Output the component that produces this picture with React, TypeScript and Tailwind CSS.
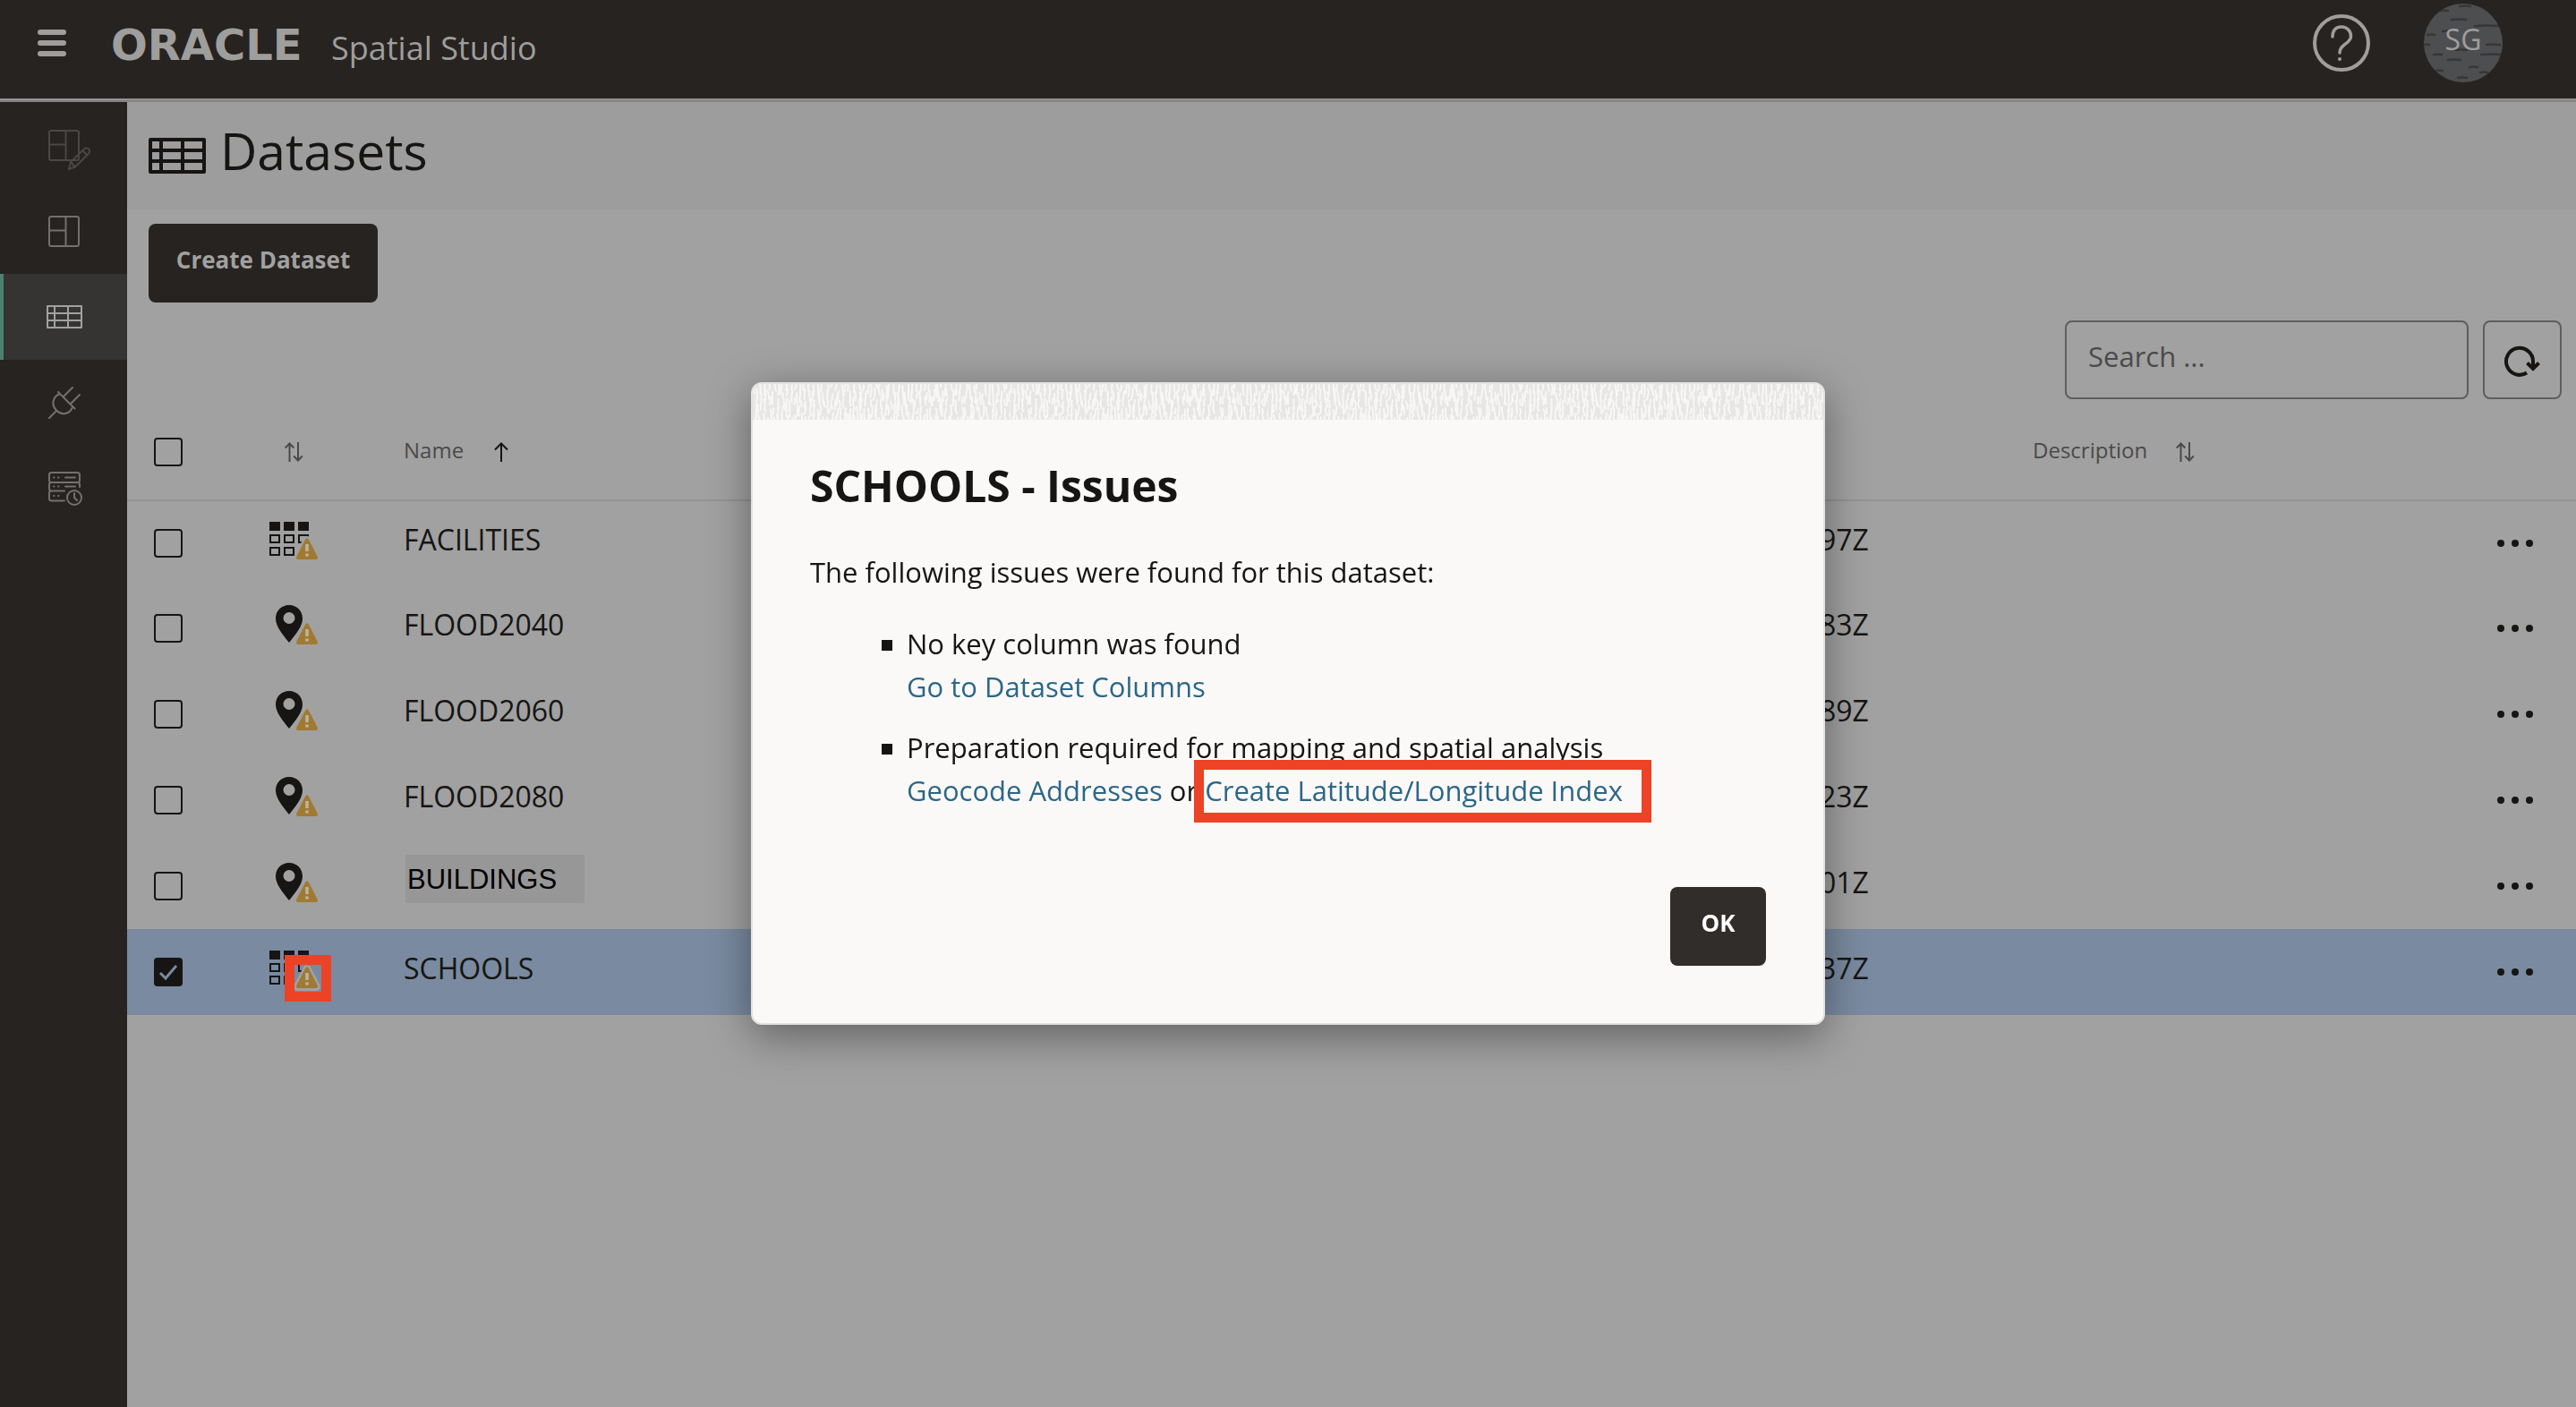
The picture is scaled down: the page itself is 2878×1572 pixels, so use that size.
import type { ReactNode } from "react";

type Kind = "table" | "pin";

interface Dataset {
  name: string;
  kind: Kind;
  modified: string;
  checked?: boolean;
  renamed?: boolean;
}

const datasets: Dataset[] = [
  { name: "FACILITIES", kind: "table", modified: "97Z" },
  { name: "FLOOD2040", kind: "pin", modified: "83Z" },
  { name: "FLOOD2060", kind: "pin", modified: "89Z" },
  { name: "FLOOD2080", kind: "pin", modified: "23Z" },
  { name: "BUILDINGS", kind: "pin", modified: "01Z", renamed: true },
  { name: "SCHOOLS", kind: "table", modified: "37Z", checked: true },
];

/* ---------- icons ---------- */

function LayoutIcon({ pencil = false }: { pencil?: boolean }) {
  return (
    <svg className="h-[52px] w-[56px] overflow-visible" viewBox="0 0 56 52" fill="none" stroke="currentColor" strokeWidth="2" strokeLinejoin="round" aria-hidden="true">
      <rect x="11" y="10" width="33" height="33" rx="2" />
      <path d="M29.500 10v33M11 25.500h18.500" />
      {pencil && (
        <g fill="none">
          <path d="M33 53l2-8 15-14.500a3.400 3.400 0 0 1 5 5L40 50.500z" />
          <path d="M35 45l5 5.500M48 32l5 5" />
        </g>
      )}
    </svg>
  );
}

function GridIcon({ large = false }: { large?: boolean }) {
  return large ? (
    <svg className="h-10 w-16" viewBox="0 0 64 40" fill="none" stroke="currentColor" strokeWidth="4" strokeLinejoin="round" aria-hidden="true">
      <rect x="2" y="2" width="60" height="36" />
      <path d="M14 2v36M38 2v36M2 14h60M2 26h60" />
    </svg>
  ) : (
    <svg className="h-[26px] w-10" viewBox="0 0 40 26" fill="none" stroke="currentColor" strokeWidth="2" strokeLinejoin="round" aria-hidden="true">
      <rect x="1" y="1" width="38" height="24" />
      <path d="M9 1v24M24 1v24M1 9h38M1 17h38" />
    </svg>
  );
}

function PlugIcon() {
  return (
    <svg className="h-9 w-9" viewBox="0 0 36 36" fill="none" stroke="currentColor" strokeWidth="2" strokeLinecap="round" aria-hidden="true">
      <path d="M1 35l8-8M11 6l18.500 18.500M17 11L27 1M25 19L35 9M12.500 8C4 12 3.500 21 9 26.500S23.500 31.500 27 23" />
    </svg>
  );
}

function ServerClockIcon() {
  return (
    <svg className="h-10 w-10" viewBox="0 0 40 40" fill="none" stroke="currentColor" strokeWidth="2" strokeLinecap="round" aria-hidden="true">
      <rect x="3" y="2" width="34" height="11" rx="2.500" />
      <path d="M37 18v-2.500a2.500 2.500 0 0 0-2.500-2.500h-29A2.500 2.500 0 0 0 3 15.500V20a2.500 2.500 0 0 0 2.500 2.500H20M5.500 22.500A2.500 2.500 0 0 0 3 25v6a2.500 2.500 0 0 0 2.500 2.500H20" />
      <path d="M8 7.500h.5M13 7.500h.5M21 7.500h11M8 17.500h.5M13 17.500h.5M21 17.500h11M8 28h.5M13 28h.5" />
      <circle cx="31" cy="30" r="8" />
      <path d="M31 25v5l3 3" />
    </svg>
  );
}

function SortIcon() {
  return (
    <svg className="h-[22px] w-[21px]" viewBox="0 0 21 22" fill="none" stroke="currentColor" strokeWidth="2" aria-hidden="true">
      <path d="M5.500 22V1.500M.7 6.500L5.500 1.500l4.800 5M15 0v20.500M10.200 15.500l4.800 5 4.800-5" />
    </svg>
  );
}

function AscendingIcon() {
  return (
    <svg className="h-[22px] w-4" viewBox="0 0 16 22" fill="none" stroke="currentColor" strokeWidth="2" aria-hidden="true">
      <path d="M8 22V1.500M1 8.500l7-7 7 7" />
    </svg>
  );
}

function RefreshIcon() {
  return (
    <svg className="h-10 w-11" viewBox="0 0 44 40" fill="none" stroke="currentColor" strokeWidth="4" aria-hidden="true">
      <path d="M34 29v-7a15 15 0 1 0-7 12.500" />
      <path d="M27.500 23.500l6.500 6.500 6.500-6.500" />
    </svg>
  );
}

function HelpIcon() {
  return (
    <svg className="h-16 w-16" viewBox="0 0 64 64" fill="none" stroke="currentColor" strokeWidth="4" strokeLinecap="round" aria-hidden="true">
      <circle cx="32" cy="32" r="30" />
      <path strokeWidth="3.500" d="M22 25C22 17.500 26 14 32 14s10.500 4.500 10.500 10.500C42.500 33 30 33 30 43" />
      <circle cx="30" cy="50" r="2" fill="currentColor" stroke="none" />
    </svg>
  );
}

function MoreIcon() {
  return (
    <svg className="h-2 w-10" viewBox="0 0 40 8" fill="currentColor" aria-hidden="true">
      <circle cx="4" cy="4" r="4" />
      <circle cx="20" cy="4" r="4" />
      <circle cx="36" cy="4" r="4" />
    </svg>
  );
}

function DatasetIcon({ kind }: { kind: Kind }) {
  return (
    <svg className="h-[52px] w-[60px]" viewBox="0 0 60 52" aria-hidden="true">
      {kind === "table" ? (
        <>
          <path fill="#161513" d="M1 2h12v10H1zM17 2h12v10H17zM33 2h12v10H33z" />
          <path fill="none" stroke="#161513" strokeWidth="2" d="M2 17h10v8H2zM18 17h10v8H18zM34 17h10v8H34zM2 31h10v8H2zM18 31h10v8H18z" />
        </>
      ) : (
        <path fill="#161513" fillRule="evenodd" d="M23 0C14.500 0 8 6.500 8 15c0 9 8 18 15 27 7-9 15-18 15-27C38 6.500 31.500 0 23 0zm0 8a6.500 6.500 0 1 1 0 13 6.500 6.500 0 0 1 0-13z" />
      )}
      <path
        d="M43 22.500L53.500 42.500H32.500z"
        fill="none"
        stroke="#a1a1a1"
        strokeWidth="9"
        strokeLinejoin="round"
      />
      <path d="M43 22.500L53 42H33z" fill="#a07a30" stroke="#a07a30" strokeWidth="4" strokeLinejoin="round" />
      <path d="M43 27v8M43 37.500v3" stroke="#b9b3a8" strokeWidth="3.500" />
    </svg>
  );
}

function BirchTexture() {
  const dashes = [
    [40, 2, 12], [17, 7, 10], [31, 17, 16], [57, 24, 28], [21, 30, 8], [4, 34, 8], [0, 45, 6],
    [70, 45, 15], [11, 56, 9], [64, 56, 24], [27, 62, 14], [51, 70, 9], [13, 74, 8], [63, 76, 8], [38, 82, 10], [36, 51, 12],
  ];
  return (
    <svg className="absolute inset-0 h-full w-full" viewBox="0 0 88 88" aria-hidden="true">
      {dashes.map(([x, y, w]) => (
        <path key={`${x}-${y}`} d={`M${x} ${y + 1}q${w / 2} -1 ${w} 0`} stroke="#383736" strokeWidth="2.500" strokeLinecap="round" fill="none" />
      ))}
    </svg>
  );
}

/* Short wavy vertical strokes, repeated every 288 pixels along the dialog's top edge. */
function buildStrokes() {
  let seed = 7;
  const rnd = () => {
    seed = (seed * 16807) % 2147483647;
    return seed / 2147483647;
  };
  let d = "";
  for (let row = 0; row < 5; row++) {
    for (let x = 1; x < 288; x += 5) {
      const px = (x + rnd() * 4).toFixed(1);
      const py = (row * 9 - 4 + rnd() * 6).toFixed(1);
      const len = (6 + rnd() * 8).toFixed(1);
      const bend = (rnd() * 4 - 2).toFixed(1);
      d += `M${px} ${py}q${bend} ${(Number(len) / 2).toFixed(1)} ${(rnd() * 3 - 1.5).toFixed(1)} ${len}`;
    }
  }
  return d;
}
const strokes = buildStrokes();

function DialogTexture() {
  return (
    <svg className="block h-10 w-full bg-[#e7e6e4]" aria-hidden="true">
      <defs>
        <pattern id="weave" width="288" height="40" patternUnits="userSpaceOnUse">
          <path d={strokes} fill="none" stroke="#f8f7f5" strokeWidth="2" strokeLinecap="round" />
        </pattern>
      </defs>
      <rect width="100%" height="100%" fill="url(#weave)" />
    </svg>
  );
}

/* ---------- page parts ---------- */

function TopBar() {
  return (
    <header className="flex h-[110px] items-center bg-[#272320] pr-[82px] pb-[14px] pl-[42px] text-[#9e9e9d]">
      <button type="button" aria-label="Open navigation" className="flex w-8 flex-col gap-1.5">
        <span className="h-1.5 rounded-full bg-current" />
        <span className="h-1.5 rounded-full bg-current" />
        <span className="h-1.5 rounded-full bg-current" />
      </button>
      <div className="ml-[50px] flex items-baseline pt-1">
        <span className="w-[246px] font-['DejaVu_Sans'] text-[48px] leading-none font-bold">ORACLE</span>
        <span className="text-[36px] leading-none">Spatial Studio</span>
      </div>
      <div className="ml-auto flex items-center gap-[60px]">
        <button type="button" aria-label="Help">
          <HelpIcon />
        </button>
        <button type="button" aria-label="Account" className="relative flex size-[88px] items-center justify-center overflow-hidden rounded-full bg-[#4d4e50]">
          <BirchTexture />
          <span className="relative pb-2 text-[32px] leading-none">SG</span>
        </button>
      </div>
    </header>
  );
}

function NavItem({ label, active, dim, children }: { label: string; active?: boolean; dim?: boolean; children: ReactNode }) {
  const tone = active
    ? "border-[#4a8272] bg-[#353432] text-[#a1a1a0]"
    : dim
      ? "border-transparent text-[#4a4745]"
      : "border-transparent text-[#73706e]";
  return (
    <a href="#" aria-label={label} className={`flex h-24 items-center justify-center border-l-4 pr-0.5 ${tone}`}>
      {children}
    </a>
  );
}

function SideBar() {
  return (
    <nav aria-label="Main" className="flex w-[142px] shrink-0 flex-col bg-[#272320]">
      <NavItem label="Active project" dim>
        <LayoutIcon pencil />
      </NavItem>
      <NavItem label="Projects">
        <LayoutIcon />
      </NavItem>
      <NavItem label="Datasets" active>
        <GridIcon />
      </NavItem>
      <NavItem label="Connections">
        <PlugIcon />
      </NavItem>
      <NavItem label="Jobs">
        <ServerClockIcon />
      </NavItem>
    </nav>
  );
}

function CheckBox({ label, checked }: { label: string; checked?: boolean }) {
  return (
    <label className="relative block size-8">
      <input
        type="checkbox"
        aria-label={label}
        defaultChecked={checked}
        className="block size-8 appearance-none rounded border-2 border-[#161513] checked:bg-[#161513]"
      />
      {checked && (
        <svg className="pointer-events-none absolute inset-0 size-8" viewBox="0 0 32 32" fill="none" stroke="#7a8aa0" strokeWidth="3" aria-hidden="true">
          <path d="M7 17l6 6L25 9" />
        </svg>
      )}
    </label>
  );
}

function DatasetRow({ row, first }: { row: Dataset; first: boolean }) {
  return (
    <tr className={`${first ? "h-[94px]" : "h-24"} ${row.checked ? "bg-[#7a8aa0]" : ""}`}>
      <td className="p-0 pl-[30px]">
        <CheckBox label={`Select ${row.name}`} checked={row.checked} />
      </td>
      <td className="p-0 pl-10">
        <div className="relative w-[60px]">
          <DatasetIcon kind={row.kind} />
          {row.checked && <div className="absolute top-[7px] left-[18px] size-[52px] border-[11px] border-[#ec4226]" />}
        </div>
      </td>
      {row.renamed ? (
        <td className="p-0 pb-4 pl-8">
          <div className="flex h-[54px] w-[200px] items-center bg-[#979797] pl-0.5 font-['Liberation_Sans'] text-[31px] leading-none text-black">
            {row.name}
          </div>
        </td>
      ) : (
        <td className="p-0 pb-2 pl-[30px] text-[32px] leading-10">{row.name}</td>
      )}
      <td className="p-0 pb-2 pl-8 text-[32px] leading-10">{row.modified}</td>
      <td className="p-0" />
      <td className="p-0">
        <button type="button" aria-label={`Actions for ${row.name}`} className="mx-auto flex h-10 items-center">
          <MoreIcon />
        </button>
      </td>
    </tr>
  );
}

function DatasetTable() {
  return (
    <table className="w-full table-fixed border-separate border-spacing-0">
      <colgroup>
        <col className="w-[118px]" />
        <col className="w-[161px]" />
        <col />
        <col className="w-[238px]" />
        <col className="w-[503px]" />
        <col className="w-[136px]" />
      </colgroup>
      <thead className="text-left text-[24px] leading-8 text-[#4b4a49]">
        <tr className="h-[108px]">
          <th className="border-b-2 border-[#939392] p-0 pl-[30px] font-normal">
            <CheckBox label="Select all datasets" />
          </th>
          <th className="border-b-2 border-[#939392] p-0 pl-[58px] font-normal">
            <button type="button" aria-label="Sort by type" className="block">
              <SortIcon />
            </button>
          </th>
          <th className="border-b-2 border-[#939392] p-0 pl-[30px] font-normal">
            <button type="button" className="flex items-center gap-[34px]">
              <span className="pb-1">Name</span>
              <span className="text-[#161513]">
                <AscendingIcon />
              </span>
            </button>
          </th>
          <th className="border-b-2 border-[#939392] p-0" />
          <th className="border-b-2 border-[#939392] p-0 pl-8 font-normal">
            <button type="button" className="flex items-center gap-8">
              <span className="pb-1">Description</span>
              <SortIcon />
            </button>
          </th>
          <th className="border-b-2 border-[#939392] p-0" />
        </tr>
      </thead>
      <tbody>
        {datasets.map((row, i) => (
          <DatasetRow key={row.name} row={row} first={i === 0} />
        ))}
      </tbody>
    </table>
  );
}

function IssuesDialog() {
  return (
    <div className="fixed inset-0 flex items-center justify-center">
      <div
        role="dialog"
        aria-modal="true"
        aria-labelledby="issues-title"
        className="w-[1200px] max-w-full overflow-hidden rounded-xl border-2 border-[#e1e2e1] bg-[#fbf9f8] shadow-[0_12px_48px_rgba(0,0,0,0.4)]"
      >
        <DialogTexture />
        <div className="px-16 pt-[42px] pb-16 text-[31px] leading-[48px]">
          <h2 id="issues-title" className="text-[48px] leading-[64px] font-bold">
            SCHOOLS - Issues
          </h2>
          <p className="mt-10">The following issues were found for this dataset:</p>
          <ul className="mt-8 flex flex-col gap-5 pl-20">
            <li className="flex gap-4">
              <span className="mt-5 size-3 shrink-0 bg-[#161513]" />
              <div>
                <p>No key column was found</p>
                <a href="#" className="text-[#2b6788]">
                  Go to Dataset Columns
                </a>
              </div>
            </li>
            <li className="flex gap-4">
              <span className="mt-5 size-3 shrink-0 bg-[#161513]" />
              <div>
                <p>Preparation required for mapping and spatial analysis</p>
                <div className="flex gap-2">
                  <a href="#" className="text-[#2b6788]">
                    Geocode Addresses
                  </a>
                  <span>or</span>
                  <span className="relative">
                    <a href="#" className="text-[#2b6788]">
                      Create Latitude/Longitude Index
                    </a>
                    <span className="pointer-events-none absolute -top-2.5 -right-8 -bottom-3 -left-3 border-[11px] border-[#ec4226]" />
                  </span>
                </div>
              </div>
            </li>
          </ul>
          <div className="mt-[84px] flex justify-end">
            <button type="button" className="h-[88px] w-[107px] rounded-lg bg-[#312d2a] pb-2 text-[26px] leading-8 font-bold text-white">
              OK
            </button>
          </div>
        </div>
      </div>
    </div>
  );
}

export default function App() {
  return (
    <div className="flex min-h-screen flex-col bg-[#a1a1a1] font-['Open_Sans',sans-serif] text-[#161513]">
      <TopBar />
      <div className="flex grow border-t-2 border-[#929090]">
        <div className="flex grow border-t-2 border-[#848383]">
          <SideBar />
          <main className="min-w-0 grow">
            <div className="flex h-[120px] items-center gap-4 bg-[#9d9d9d] pl-6">
              <GridIcon large />
              <h1 className="pb-3 text-[57px] leading-[72px] font-medium">Datasets</h1>
            </div>
            <div className="pt-4 pl-6">
              <button type="button" className="h-[88px] w-64 rounded-lg bg-[#272320] pb-2 text-[26px] leading-8 font-bold text-[#a1a1a1]">
                Create Dataset
              </button>
            </div>
            <div className="mt-5 mb-1.5 flex justify-end gap-4 pr-4">
              <input
                type="text"
                aria-label="Search datasets"
                placeholder="Search ..."
                className="h-[88px] w-[451px] rounded-lg border-2 border-[#5f5e5d] pb-2 pl-6 text-[31px] placeholder:text-[#4b4a49]"
              />
              <button type="button" aria-label="Refresh" className="flex size-[88px] items-center justify-center rounded-lg border-2 border-[#5f5e5d]">
                <RefreshIcon />
              </button>
            </div>
            <DatasetTable />
          </main>
        </div>
      </div>
      <IssuesDialog />
    </div>
  );
}
